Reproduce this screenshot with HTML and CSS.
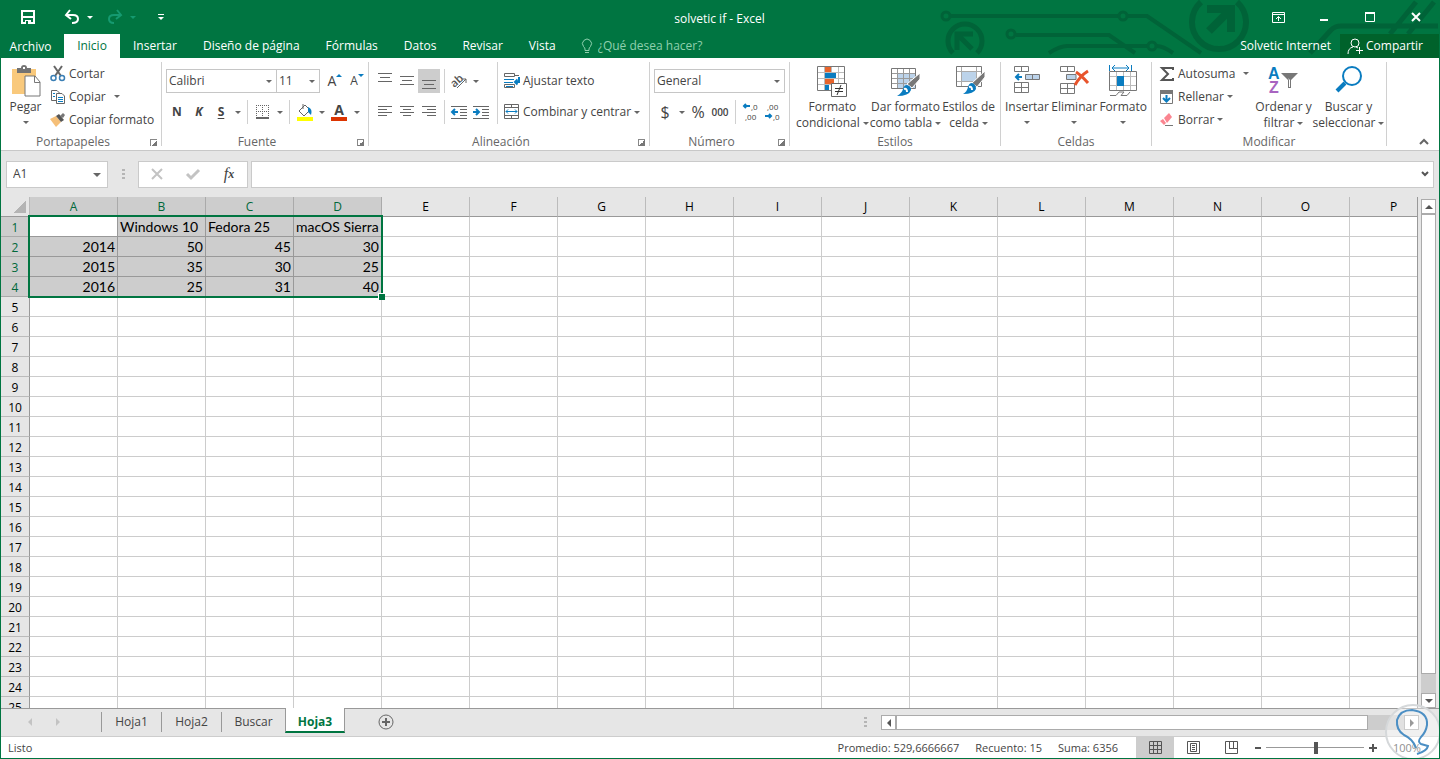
FILE: index.html
```
<!doctype html>

<html lang="es">

	<head>
		<meta charset="utf-8" />
		<title>solvetic if - Excel</title>
		<link rel="stylesheet" href="styles.css">
		<script src="script.js" defer></script>
	</head>

	<body>

		<div class="window">
			<header class="top">
				<svg class="circuit" viewBox="0 0 520 58" width="520" height="58" fill="none" stroke="#006338" stroke-width="4">
					<circle cx="27" cy="16" r="4" stroke-width="3" />
					<path d="M32 16H199M209 16H228L282 53" />
					<circle cx="204" cy="16" r="4" stroke-width="3" />
					<circle cx="92" cy="34" r="4" stroke-width="3" />
					<path d="M97 35H190L216 53M130 53Q141 46 148 46H228M238 46Q244 46 254 53" />
					<circle cx="233" cy="46" r="4" stroke-width="3" />
					<path d="M34 53A17 17 0 1 1 58 53" stroke-width="5" />
					<path d="M38 50V34H54M38 34L53 49" stroke-width="5" />
					<path d="M282 2A27 27 0 1 0 318 2" stroke-width="6" />
					<path d="M288 9H312V32M312 9L290 31" stroke-width="8" />
					<path d="M391 53L412 30Q416 26 422 26H519M471 34L497 2M489 34L515 2" stroke-width="5" />
				</svg>

				<div class="titlebar">
					<div class="quick">
						<button aria-label="Guardar"><svg width="16" height="16" viewBox="0 0 16 16" fill="none" stroke="#fff" stroke-width="2"><path d="M2 2H14V14H2ZM2 8H14" /><path d="M5 15V11H11V15" fill="#fff" stroke="none" /><path d="M7 12V15" stroke="#007541" /></svg></button>
						<button class="undo" aria-label="Deshacer"><svg width="16" height="16" viewBox="0 0 16 16" fill="none" stroke="#fff" stroke-width="2"><path d="M6 1L2 6L7 10M2 6H9Q14 6 14 10T8 14" /></svg><span class="caret"></span></button>
						<button class="redo" aria-label="Rehacer"><svg width="16" height="16" viewBox="0 0 16 16" fill="none" stroke="#159a70" stroke-width="2"><path d="M10 1L14 6L9 10M14 6H7Q2 6 2 10T7 14" /></svg><span class="caret"></span></button>
						<button class="more" aria-label="Personalizar"><span class="dash"></span><span class="caret"></span></button>
					</div>
					<h1>solvetic if - Excel</h1>
					<div class="controls">
						<button aria-label="Opciones de cinta"><svg width="13" height="11" viewBox="0 0 13 11" fill="none" stroke="#fff"><path d="M.5 .5H12.5V10.5H.5ZM0 2.5H13M6.5 9V4.500M4 7L6.500 4.500L9 7" /></svg></button>
						<button aria-label="Minimizar"><svg width="10" height="10" viewBox="0 0 10 10"><path d="M1 7H9V9H1Z" fill="#fff" /></svg></button>
						<button aria-label="Maximizar"><svg width="10" height="10" viewBox="0 0 10 10" fill="none" stroke="#fff"><path d="M.5 1V9.500H9.500V1M0 1H10" /><path d="M0 1H10" stroke-width="2" /></svg></button>
						<button aria-label="Cerrar"><svg width="10" height="10" viewBox="0 0 10 10" stroke="#fff" stroke-width="2"><path d="M1 1L9 9M9 1L1 9" /></svg></button>
					</div>
				</div>

				<nav class="tabs">
					<a class="file" href="#">Archivo</a>
					<a class="active" href="#">Inicio</a>
					<a href="#">Insertar</a>
					<a href="#">Diseño de página</a>
					<a href="#">Fórmulas</a>
					<a href="#">Datos</a>
					<a href="#">Revisar</a>
					<a href="#">Vista</a>
					<label class="tell">
						<svg width="12" height="15" viewBox="0 0 12 15" fill="none" stroke="#8fd0ae"><path d="M4 11.500V10Q4 9 2.500 7.500A4.500 4.500 0 1 1 9.500 7.500Q8 9 8 10V11.500ZM4 13.500H8" /></svg>
						<input type="text" placeholder="¿Qué desea hacer?" />
					</label>
					<a class="account" href="#">Solvetic Internet</a>
					<button class="share">
						<svg width="16" height="16" viewBox="0 0 16 16" fill="none" stroke="#fff"><circle cx="8" cy="5" r="4" /><path d="M1 16Q1 10 6 9M9 9L11 10M12.500 9V16M9 12.500H16" /></svg>
						Compartir
					</button>
				</nav>
			</header>

			<section class="ribbon">
				<div class="group clipboard">
					<div class="tools">
						<button class="big">
							<svg width="30" height="32" viewBox="0 0 30 32"><path d="M1 4H25V29H1Z" fill="#f9c97c" /><path d="M6 3H10Q10 0 13 0T16 3H20V8H6Z" fill="#737373" /><path d="M12 2H14V4H12Z" fill="#fff" /><path d="M14 11H24L29 17V31H14Z" fill="#fff" stroke="#777" /><path d="M23.500 11V17.500H29" fill="none" stroke="#777" /></svg>
							<span>Pegar</span><span class="caret"></span>
						</button>
						<div class="stack">
							<button><svg width="16" height="16" viewBox="0 0 16 16" fill="none"><path d="M4 0L11 10M12 0L5 10" stroke="#666" stroke-width="2" /><circle cx="3.500" cy="12" r="2.500" stroke="#3a7fb5" stroke-width="1.500" /><circle cx="12" cy="12" r="2.500" stroke="#3a7fb5" stroke-width="1.500" /></svg>Cortar</button>
							<button><svg width="16" height="16" viewBox="0 0 16 16" fill="#fff" stroke="#666"><path d="M1.500 1.500H7L9.500 4V11.500H1.500Z" /><path d="M6.500 4.500H12L14.500 7V14.500H6.500Z" /><path d="M3 4.500H5M3 7.500H5M8 8.500H13M8 10.500H13M8 12.500H13" stroke="#0a7cc0" /></svg>Copiar <span class="caret spaced"></span></button>
							<button><svg width="16" height="16" viewBox="0 0 16 16"><path d="M0 7L6 4L11 10L6 15Z" fill="#f5bf78" /><path d="M6 4L9 2L14 8L11 10Z" fill="#555" /><path d="M10 4L13 1L15 3L13 6Z" fill="#777" /></svg>Copiar formato</button>
						</div>
					</div>
					<footer><span>Portapapeles</span><button class="launch" aria-label="Portapapeles"></button></footer>
				</div>

				<div class="group font">
					<div class="tools rows">
						<div class="row">
							<span class="combo family"><select aria-label="Fuente"><option>Calibri</option></select><span class="caret"></span></span>
							<span class="combo size"><select aria-label="Tamaño"><option>11</option></select><span class="caret"></span></span>
							<button class="icon grow"><span>A</span><i class="tri up"></i></button>
							<button class="icon shrink"><span>A</span><i class="tri"></i></button>
						</div>
						<div class="row">
							<button class="icon bold">N</button>
							<button class="icon italic">K</button>
							<button class="icon under">S</button>
							<button class="drop" aria-label="Subrayado"><span class="caret"></span></button>
							<span class="line"></span>
							<button class="icon" aria-label="Bordes"><svg width="14" height="14" viewBox="0 0 14 14" fill="none" stroke="#666"><path d="M.5 0V13M6.500 0V13M12.500 0V13M0 .5H13M0 6.500H13" stroke-dasharray="1 1" /><path d="M0 13H13" stroke-width="2" /></svg></button>
							<button class="drop" aria-label="Más bordes"><span class="caret"></span></button>
							<span class="line"></span>
							<button class="icon" aria-label="Relleno"><svg width="16" height="17" viewBox="0 0 16 17" fill="none"><path d="M2 7L8 1L13 6L7 12Z" stroke="#666" /><path d="M6 5V0" stroke="#666" /><path d="M11 3Q16 5 14 11L11 8Z" fill="#0a7cc0" /><path d="M0 13H16V17H0Z" fill="#ff0" /></svg></button>
							<button class="drop" aria-label="Más rellenos"><span class="caret"></span></button>
							<button class="icon fontcolor">A</button>
							<button class="drop" aria-label="Más colores"><span class="caret"></span></button>
						</div>
					</div>
					<footer><span>Fuente</span><button class="launch" aria-label="Fuente"></button></footer>
				</div>

				<div class="group align">
					<div class="tools">
						<div class="rows">
							<div class="row">
								<button class="icon" aria-label="Arriba"><svg width="14" height="16" viewBox="0 0 14 16" stroke="#666"><path d="M0 .5H14M2 4.500H12M0 8.500H14" /></svg></button>
								<button class="icon" aria-label="Medio"><svg width="14" height="16" viewBox="0 0 14 16" stroke="#666"><path d="M0 3.500H14M2 7.500H12M0 11.500H14" /></svg></button>
								<button class="icon on" aria-label="Abajo"><svg width="14" height="16" viewBox="0 0 14 16" stroke="#666"><path d="M0 7.500H14M2 11.500H12M0 15.500H14" /></svg></button>
								<span class="line"></span>
								<button class="icon" aria-label="Orientación"><svg width="18" height="16" viewBox="0 0 18 16"><text x="0" y="12" transform="rotate(-42 6 8)" font-size="11" font-weight="600" fill="#555">ab</text><path d="M7 15L16 6M12 6H16V10" stroke="#666" fill="none" /></svg></button>
								<button class="drop" aria-label="Más orientaciones"><span class="caret"></span></button>
							</div>
							<div class="row">
								<button class="icon" aria-label="Izquierda"><svg width="14" height="12" viewBox="0 0 14 12" stroke="#666"><path d="M0 .5H14M0 3.500H9M0 6.500H14M0 9.500H9" /></svg></button>
								<button class="icon" aria-label="Centro"><svg width="14" height="12" viewBox="0 0 14 12" stroke="#666"><path d="M0 .5H14M3 3.500H11M0 6.500H14M3 9.500H11" /></svg></button>
								<button class="icon" aria-label="Derecha"><svg width="14" height="12" viewBox="0 0 14 12" stroke="#666"><path d="M0 .5H14M5 3.500H14M0 6.500H14M5 9.500H14" /></svg></button>
								<span class="line"></span>
								<button class="icon" aria-label="Disminuir sangría"><svg width="16" height="13" viewBox="0 0 16 13" stroke="#666"><path d="M0 .5H16M9 3.500H16M9 6.500H16M9 9.500H16M0 12.500H16" /><path d="M7 6H1M4 3L1 6L4 9" fill="none" stroke="#0a7cc0" stroke-width="2" /></svg></button>
								<button class="icon" aria-label="Aumentar sangría"><svg width="16" height="13" viewBox="0 0 16 13" stroke="#666"><path d="M0 .5H16M9 3.500H16M9 6.500H16M9 9.500H16M0 12.500H16" /><path d="M0 6H6M3 3L6 6L3 9" fill="none" stroke="#0a7cc0" stroke-width="2" /></svg></button>
							</div>
						</div>
						<div class="rows wraps">
							<div class="row"><button><svg width="16" height="16" viewBox="0 0 16 16" fill="none" stroke="#666"><path d="M.5 .5H10.500V3.500H.5ZM.5 11.500H10.500V14.500H.5ZM11 2.500H15" /><path d="M15 4V9H11M13.500 6.500L11 9L13.500 11.500" stroke="#0a7cc0" stroke-width="2" /><path d="M0 6.500H10M0 9.500H9M2 13.500H9" stroke="#0a7cc0" /></svg>Ajustar texto</button></div>
							<div class="row"><button><svg width="16" height="16" viewBox="0 0 16 16" fill="none" stroke="#666"><path d="M.5 .5H14.500V14.500H.5ZM0 3.500H15M0 11.500H15M7.500 0V3M7.500 12V15" /><path d="M2 7.500H13M4 5.500L2 7.500L4 9.500M11 5.500L13 7.500L11 9.500" stroke="#0a7cc0" /></svg>Combinar y centrar <span class="caret spaced"></span></button></div>
						</div>
					</div>
					<footer><span>Alineación</span><button class="launch" aria-label="Alineación"></button></footer>
				</div>

				<div class="group number">
					<div class="tools rows">
						<div class="row">
							<span class="combo format"><select aria-label="Formato de número"><option>General</option></select><span class="caret"></span></span>
						</div>
						<div class="row">
							<button class="icon sign">$</button>
							<button class="drop" aria-label="Moneda"><span class="caret"></span></button>
							<button class="icon sign">%</button>
							<button class="icon zeros">000</button>
							<span class="line"></span>
							<button class="icon" aria-label="Aumentar decimales"><svg width="16" height="18" viewBox="0 0 16 18"><path d="M7 3H1M3 1L1 3L3 5" fill="none" stroke="#0a7cc0" stroke-width="2" /><text x="8" y="7" font-size="8" fill="#444">,0</text><text x="2" y="17" font-size="8" fill="#444">,00</text></svg></button>
							<button class="icon" aria-label="Disminuir decimales"><svg width="16" height="18" viewBox="0 0 16 18"><text x="2" y="7" font-size="8" fill="#444">,00</text><path d="M0 13H6M4 11L6 13L4 15" fill="none" stroke="#0a7cc0" stroke-width="2" /><text x="8" y="17" font-size="8" fill="#444">,0</text></svg></button>
						</div>
					</div>
					<footer><span>Número</span><button class="launch" aria-label="Número"></button></footer>
				</div>

				<div class="group styles">
					<div class="tools">
						<button class="big">
							<svg width="32" height="32" viewBox="0 0 32 32" fill="none"><path d="M1.500 1.500H28.500V25.500H1.500Z" fill="#fff" stroke="#777" /><path d="M8.500 2V25M15.500 2V25M22.500 2V25M2 7.500H28M2 13.500H28M2 19.500H28" stroke="#bbb" /><path d="M9 2H15V7H9ZM9 14H18V19H9Z" fill="#e8642c" /><path d="M9 8H20V13H9ZM9 20H13V25H9Z" fill="#0a7cc0" /><path d="M15.500 18.500H30.500V31.500H15.500Z" fill="#fff" stroke="#666" /><path d="M19 23.500H27M19 26.500H27M25 20L21 30" stroke="#333" /></svg>
							<span>Formato</span><span>condicional<i class="caret"></i></span>
						</button>
						<button class="big">
							<svg width="32" height="32" viewBox="0 0 32 32" fill="none"><path d="M2.500 3.500H26.500V23.500H2.500Z" fill="#fff" stroke="#777" /><path d="M8 9H26V23H8Z" fill="#bcd3ea" /><path d="M8.500 4V23M14.500 4V23M20.500 4V23M3 8.500H26M3 13.500H26M3 18.500H26" stroke="#999" /><path d="M31 8V14L23 23L18 19Z" fill="#777" stroke="#fff" /><path d="M18 20Q22 21 22 25Q20 31 8 31Q13 28 14 24Q15 20 18 20Z" fill="#0a7cc0" /><path d="M15 24Q18 23 18 27" stroke="#fff" stroke-width="2" /></svg>
							<span>Dar formato</span><span>como tabla<i class="caret"></i></span>
						</button>
						<button class="big">
							<svg width="32" height="32" viewBox="0 0 32 32" fill="none"><path d="M3.500 1.500H28.500V21.500H3.500Z" fill="#fff" stroke="#777" /><path d="M8.500 2V21M23.500 2V21M4 6.500H28M4 16.500H28" stroke="#aaa" /><path d="M9 7H23V16H9Z" fill="#bcd3ea" /><path d="M32 6V12L24 22L19 18Z" fill="#777" stroke="#fff" /><path d="M19 18Q23 19 23 24Q21 29 10 29Q14 27 15 22Q16 18 19 18Z" fill="#0a7cc0" /><path d="M16 22Q19 21 19 25" stroke="#fff" stroke-width="2" /></svg>
							<span>Estilos de</span><span>celda<i class="caret"></i></span>
						</button>
					</div>
					<footer><span>Estilos</span></footer>
				</div>

				<div class="group cells">
					<div class="tools">
						<button class="big">
							<svg width="32" height="32" viewBox="0 0 32 32" fill="none" stroke="#777"><path d="M3.500 1.500H17.500V6.500H3.500ZM10.500 1V7M3.500 17.500H17.500V27.500H3.500ZM10.500 17V28M3 22.500H18" /><path d="M14.500 9.500H28.500V14.500H14.500ZM21.500 9V15" fill="#bcd3ea" /><path d="M11 12H5M8 9L5 12L8 15" stroke="#0a7cc0" stroke-width="2" /></svg>
							<span>Insertar</span><span class="caret"></span>
						</button>
						<button class="big">
							<svg width="32" height="32" viewBox="0 0 32 32" fill="none" stroke="#777"><path d="M2.500 1.500H16.500V6.500H2.500ZM9.500 1V7M2.500 18.500H16.500V28.500H2.500ZM9.500 18V29M2 23.500H17" /><path d="M8.500 9.500H18V14.500H8.500Z" fill="#bcd3ea" /><path d="M18 7Q23 10 30 18M30 6Q22 11 17 20" stroke="#e8542c" stroke-width="3" /></svg>
							<span>Eliminar</span><span class="caret"></span>
						</button>
						<button class="big">
							<svg width="32" height="32" viewBox="0 0 32 32" fill="none" stroke="#777"><path d="M2.500 6.500H29.500V25.500H2.500Z" fill="#fff" /><path d="M9.500 7V25M16.500 7V25M23.500 7V25M3 11.500H29M3 20.500H29" stroke="#bbb" /><path d="M10 11H17V21H10Z" fill="#0a7cc0" stroke="none" /><path d="M3 30.500H9L12 27H17L14 30.500H20L23 27" /><path d="M2.500 0V6M24.500 0V6M5 3H22M8 0L5 3L8 6M19 0L22 3L19 6" stroke="#0a7cc0" /></svg>
							<span>Formato</span><span class="caret"></span>
						</button>
					</div>
					<footer><span>Celdas</span></footer>
				</div>

				<div class="group edit">
					<div class="tools">
						<div class="stack">
							<button><svg width="16" height="16" viewBox="0 0 16 16" fill="none" stroke="#555" stroke-width="2"><path d="M14 4V2H3L9 8L3 14H14V12" /></svg>Autosuma <span class="caret spaced"></span></button>
							<button><svg width="16" height="16" viewBox="0 0 16 16" fill="none"><path d="M1.500 1.500H13.500V14.500H1.500Z" stroke="#777" /><path d="M1 1H14V5H1Z" fill="#777" /><path d="M7.500 6V12M4 9L7.500 12.500L11 9" stroke="#0a7cc0" stroke-width="2" /></svg>Rellenar<span class="caret"></span></button>
							<button><svg width="16" height="16" viewBox="0 0 16 16"><path d="M5 6L10 1L13 5L8 11Z" fill="#fb8590" /><path d="M1 9L4 7L7 11L5 13Z" fill="#fb8590" /><path d="M6 13.500H14" stroke="#777" /></svg>Borrar<span class="caret"></span></button>
						</div>
						<button class="big">
							<svg class="sort" width="32" height="32" viewBox="0 0 32 32"><text x="0" y="14" font-size="16" fill="#0a7cc0">A</text><text x="1" y="28" font-size="16" fill="#a864c0">Z</text><path d="M13 8H30L23 15V23H20V15Z" fill="#777" /><path d="M20 13L22 15V22H21V15Z" fill="#fff" /></svg>
							<span>Ordenar y</span><span>filtrar<i class="caret"></i></span>
						</button>
						<button class="big">
							<svg width="32" height="32" viewBox="0 0 32 32" fill="none" stroke="#0a7cc0"><circle cx="19" cy="11" r="9" stroke-width="2" /><path d="M12 18L4 26" stroke-width="4" /></svg>
							<span>Buscar y</span><span>seleccionar<i class="caret"></i></span>
						</button>
					</div>
					<footer><span>Modificar</span></footer>
				</div>

				<button class="collapse" aria-label="Contraer"><svg width="10" height="7" viewBox="0 0 10 7" fill="none" stroke="#666" stroke-width="2"><path d="M1 6L5 2L9 6" /></svg></button>
			</section>

			<section class="formulabar">
				<div class="namebox"><input type="text" value="A1" aria-label="Cuadro de nombres" /><button aria-label="Nombres"><i class="caret wide"></i></button></div>
				<span class="dots"></span>
				<div class="fx">
					<button aria-label="Cancelar"><svg width="12" height="12" viewBox="0 0 12 12" stroke="#c3c3c3" stroke-width="2"><path d="M1 1L11 11M11 1L1 11" /></svg></button>
					<button aria-label="Introducir"><svg width="14" height="12" viewBox="0 0 14 12" fill="none" stroke="#c3c3c3" stroke-width="3"><path d="M1 6L5 10L13 2" /></svg></button>
					<button class="fn"><i>f</i><i class="x">x</i></button>
				</div>
				<div class="formula"><input type="text" aria-label="Fórmula" /><button aria-label="Expandir"><svg width="8" height="6" viewBox="0 0 8 6" fill="none" stroke="#555" stroke-width="2"><path d="M1 1L4 4L7 1" /></svg></button></div>
			</section>

			<main class="sheet">
				<div class="grid">
					<table>
						<thead><tr id="letters"><th class="corner"></th></tr></thead>
						<tbody id="rows"></tbody>
					</table>
					<div class="selection"></div>
				</div>
				<div class="vscroll">
					<button aria-label="Subir"><i class="arrow up"></i></button>
					<div class="track"><div class="thumb"></div></div>
					<button aria-label="Bajar"><i class="arrow down"></i></button>
				</div>
			</main>

			<section class="sheets">
				<div class="steps"><button aria-label="Anterior"><i class="arrow left"></i></button><button aria-label="Siguiente"><i class="arrow right"></i></button></div>
				<a href="#">Hoja1</a>
				<a href="#">Hoja2</a>
				<a href="#">Buscar</a>
				<a class="active" href="#">Hoja3</a>
				<button class="add" aria-label="Hoja nueva"><svg width="16" height="16" viewBox="0 0 16 16" fill="none" stroke="#666"><circle cx="8" cy="8" r="7" /><path d="M4 8H12M8 4V12" stroke-width="2" /></svg></button>
				<span class="dots"></span>
				<div class="hscroll">
					<button aria-label="Izquierda"><i class="arrow left"></i></button>
					<div class="track"><div class="thumb"></div></div>
					<button aria-label="Derecha"><i class="arrow right"></i></button>
				</div>
			</section>

			<footer class="status">
				<span class="ready">Listo</span>
				<span>Promedio: 529,6666667</span>
				<span>Recuento: 15</span>
				<span>Suma: 6356</span>
				<div class="views">
					<button class="on" aria-label="Normal"><svg width="13" height="13" viewBox="0 0 13 13" fill="none" stroke="#555"><path d="M.5 .5H12.500V12.500H.5ZM4.500 0V13M8.500 0V13M0 4.500H13M0 8.500H13" /></svg></button>
					<button aria-label="Diseño de página"><svg width="13" height="13" viewBox="0 0 13 13" fill="none" stroke="#555"><path d="M.5 .5H12.500V12.500H.5ZM3.500 2.500H9.500V10.500H3.500ZM5 4.500H8M5 6.500H8M5 8.500H8" /></svg></button>
					<button aria-label="Salto de página"><svg width="13" height="13" viewBox="0 0 13 13" fill="none" stroke="#555"><path d="M.5 .5H12.500V12.500H.5ZM4.500 0V7.500M8.500 0V7.500M4 7.500H13" /></svg></button>
				</div>
				<div class="zoom">
					<button aria-label="Alejar"><svg width="8" height="8" viewBox="0 0 8 8" stroke="#555" stroke-width="2"><path d="M1 4H7" /></svg></button>
					<input type="range" min="0" max="100" value="51" aria-label="Zoom" />
					<button aria-label="Acercar"><svg width="8" height="8" viewBox="0 0 8 8" stroke="#555" stroke-width="2"><path d="M0 4H8M4 0V8" /></svg></button>
					<span class="percent">100%</span>
				</div>
			</footer>

			<svg class="bulb" width="56" height="56" viewBox="0 0 56 56" fill="none">
				<circle cx="28" cy="28" r="27" fill="#fff" fill-opacity=".4" stroke="#d5d8da" stroke-width="2" />
				<path d="M31 44Q28 35 19 31Q11 26 12 16Q15 6 27 6Q43 8 42 21Q41 28 36 33Q32 38 36 40L43 42Q42 47 32 50" stroke="#4c8fc4" stroke-width="2" />
			</svg>
		</div>

	</body>

</html>
```
FILE: styles.css
```
* {
	box-sizing: border-box;
}

body {
	margin: 0;
	font-family: "Open Sans", "Segoe UI", sans-serif;
	font-size: 12px;
	line-height: 16px;
	color: #444;
}

button, input, select {
	margin: 0;
	padding: 0;
	border: none;
	outline: none;
	background: none;
	font: inherit;
	color: inherit;
}

a {
	color: inherit;
	text-decoration: none;
}

svg {
	display: block;
	flex: none;
	overflow: visible;
}

.window {
	position: relative;
	display: flex;
	flex-direction: column;
	height: 100vh;
	border: 1px solid #007541;
	border-top: none;
	background: #e6e6e6;
	overflow: hidden;
}

.caret {
	display: inline-block;
	flex: none;
	border: 3px solid transparent;
	border-top-color: #666;
	border-bottom: none;
	vertical-align: middle;
}

.caret.wide {
	border-width: 4px 4px 0;
}

/* title bar and tabs */

.top {
	position: relative;
	flex: none;
	background: #007541;
	color: #fff;
}

.circuit {
	position: absolute;
	top: 0;
	right: 0;
}

.titlebar {
	position: relative;
	display: flex;
	align-items: center;
	height: 34px;
}

.titlebar h1 {
	margin: 0;
	padding: 4px 20px 0 0;
	font-size: 12px;
	font-weight: normal;
}

.quick {
	display: flex;
	flex: 1;
	align-items: center;
	gap: 20px;
	padding-left: 19px;
}

.quick button {
	display: flex;
	align-items: center;
	gap: 7px;
}

.quick .undo {
	margin-left: 8px;
}

.quick .redo {
	margin-left: -6px;
}

.quick .caret {
	border-top-color: #fff;
}

.quick .redo .caret {
	border-top-color: #159a70;
}

.quick .more {
	flex-direction: column;
	gap: 2px;
	margin-left: 2px;
}

.dash {
	width: 6px;
	height: 1px;
	background: #fff;
}

.controls {
	display: flex;
	flex: 1;
	justify-content: flex-end;
}

.controls button {
	display: flex;
	justify-content: center;
	width: 46px;
}

.tabs {
	position: relative;
	display: flex;
	align-items: stretch;
	height: 24px;
	line-height: 24px;
}

.tabs a {
	padding: 0 13px;
}

.tabs .file {
	width: 63px;
	padding: 1px 4px 0 0;
	text-align: center;
}

.tabs .active {
	width: 56px;
	padding: 0;
	background: #fff;
	color: #007541;
	text-align: center;
}

.tell {
	display: flex;
	flex: 1;
	align-items: center;
	gap: 5px;
	padding-left: 12px;
}

.tell input {
	width: 160px;
}

.tell input::placeholder {
	color: #8fd0ae;
	opacity: 1;
}

.tabs .account {
	padding: 0 9px;
}

.share {
	display: flex;
	align-items: center;
	gap: 3px;
	width: 99px;
	padding-left: 7px;
	background: #00622b;
}

/* ribbon */

.ribbon {
	display: flex;
	flex: none;
	height: 93px;
	border-bottom: 1px solid #c8c8c8;
	background: #fff;
}

.group {
	display: flex;
	flex: none;
	flex-direction: column;
	justify-content: space-between;
	margin: 4px 0;
	border-right: 1px solid #d0d0d0;
}

.group footer {
	display: flex;
	align-items: center;
	height: 8px;
	color: #666;
}

.group footer span {
	flex: 1;
	text-align: center;
}

.launch {
	width: 7px;
	height: 7px;
	margin: 0 4px 0 5px;
	border: 1px solid #888;
	border-width: 1px 0 0 1px;
	background: linear-gradient(135deg, transparent 50%, #777 50%);
}

.tools {
	display: flex;
}

.clipboard { width: 161px; }
.font { width: 207px; }
.align { width: 281px; }
.number { width: 140px; }
.styles { width: 211px; }
.cells { width: 151px; }
.edit { width: 235px; }

.tools button {
	display: flex;
	align-items: center;
	white-space: nowrap;
}

.tools .big {
	flex-direction: column;
	flex: none;
	padding-top: 3px;
}

.big svg {
	margin-bottom: 2px;
}

.big .caret {
	margin: 6px 0 0;
}

.big i.caret {
	margin: 0 0 0 3px;
}

.clipboard .big {
	width: 49px;
}

.stack {
	display: flex;
	flex-direction: column;
}

.stack button {
	height: 23px;
	gap: 3px;
}

.caret.spaced {
	margin-left: 5px;
}

.rows {
	display: flex;
	flex-direction: column;
	gap: 7px;
	padding-top: 7px;
}

.row {
	display: flex;
	align-items: stretch;
	height: 24px;
}

.font .tools, .number .tools {
	padding-left: 4px;
}

.combo {
	position: relative;
	display: flex;
	align-items: center;
	border: 1px solid #c6c6c6;
}

.combo select {
	width: 100%;
	padding-left: 2px;
	appearance: none;
}

.combo .caret {
	position: absolute;
	right: 4px;
	pointer-events: none;
}

.family {
	width: 111px;
}

.size {
	width: 44px;
	margin-left: -1px;
}

.format {
	width: 131px;
}

.icon {
	flex: none;
	justify-content: center;
	width: 22px;
}

.icon.on {
	background: #cdcdcd;
}

.drop {
	flex: none;
	justify-content: center;
	width: 11px;
}

.line {
	flex: none;
	width: 1px;
	margin: 0 4px;
	background: #d0d0d0;
}

.grow {
	margin-left: 4px;
	font-size: 14px;
}

.tri {
	align-self: flex-start;
	margin-top: 5px;
	border: 3px solid transparent;
	border-top-color: #0a7cc0;
	border-bottom: none;
}

.tri.up {
	border-top: none;
	border-bottom: 3px solid #0a7cc0;
}

.bold, .under, .italic {
	font-weight: bold;
}

.italic {
	font-style: italic;
}

.under {
	text-decoration: underline;
	text-underline-offset: 2px;
}

.tools .fontcolor {
	align-self: center;
	width: 16px;
	height: 17px;
	margin: 0 4px;
	border-bottom: 4px solid #dc3400;
	font-size: 14px;
	font-weight: bold;
	line-height: 12px;
}

.align .tools {
	padding-left: 5px;
}

.align .line {
	margin: 0 3px 0 4px;
}

.wraps {
	margin-left: 5px;
	padding-left: 6px;
	border-left: 1px solid #d0d0d0;
}

.wraps button {
	gap: 3px;
}

.wraps .spaced {
	margin-left: 0;
}

.sign {
	font-size: 16px;
}

.zeros {
	font-size: 10px;
	font-weight: 600;
}

.styles .tools {
	justify-content: space-between;
	padding: 0 5px 0 6px;
}

.cells .tools {
	justify-content: space-between;
	padding: 0 4px;
}

.edit .tools {
	padding-left: 7px;
}

.edit .stack {
	width: 92px;
}

.edit .big {
	width: 65px;
}

.sort {
	font-family: "Liberation Sans", sans-serif;
	font-weight: bold;
}

.collapse {
	display: flex;
	flex: 1;
	align-items: flex-end;
	justify-content: flex-end;
	padding: 0 10px 5px 0;
}

/* formula bar */

.formulabar {
	display: flex;
	flex: none;
	align-items: center;
	height: 46px;
	padding: 0 5px;
}

.namebox, .fx, .formula {
	display: flex;
	align-items: center;
	height: 27px;
	border: 1px solid #cacaca;
	background: #fff;
}

.namebox {
	width: 102px;
	padding: 0 6px;
}

.namebox input {
	flex: 1;
	min-width: 0;
}

.dots {
	width: 3px;
	height: 11px;
	background: repeating-linear-gradient(#b5b5b5 0 2px, transparent 2px 4px);
}

.formulabar .dots {
	margin: 0 13px 0 14px;
}

.fx {
	width: 110px;
}

.fx button {
	display: flex;
	flex: 1;
	justify-content: center;
}

.fn {
	font-family: "Liberation Serif", serif;
	font-size: 16px;
}

.fn .x {
	font-size: 12px;
	font-weight: bold;
}

.formula {
	flex: 1;
	margin-left: 3px;
	padding-right: 4px;
}

.formula input {
	flex: 1;
}

/* cells */

.sheet {
	display: flex;
	flex: 1;
	min-height: 0;
}

.grid {
	position: relative;
	flex: 1;
	min-width: 0;
	border-right: 1px solid #999;
	overflow: hidden;
}

.grid table {
	width: 1437px;
	table-layout: fixed;
	border-spacing: 0;
}

.grid th, .grid td {
	width: 88px;
	height: 20px;
	padding: 0 2px;
	border-right: 1px solid #ccc;
	border-bottom: 1px solid #ccc;
	font-family: Lato, Calibri, sans-serif;
	font-size: 14px;
	font-weight: normal;
	line-height: 18px;
	text-align: center;
	white-space: nowrap;
	color: #000;
}

.grid th {
	border-color: #bbb;
	font-family: inherit;
	font-size: 12px;
	background: #e6e6e6;
}

.grid thead th {
	border-bottom-color: #999;
}

.grid tbody th {
	padding-top: 2px;
	line-height: 17px;
	border-right-color: #999;
}

.grid .corner {
	width: 29px;
	background: linear-gradient(#b4b4b4, #b4b4b4);
	background: linear-gradient(135deg, transparent 50%, #b4b4b4 50%) 13px 4px / 12px 12px no-repeat #e6e6e6;
	border-right-color: #bbb;
}

.grid th.picked {
	background: #cdcdcd;
	border-color: #aaa;
	color: #00683a;
}

.grid td {
	background: #fff;
	text-align: right;
}

.grid td.text {
	text-align: left;
}

.grid td.picked {
	background: #cdcdcd;
	border-color: #999;
}

.grid td.current {
	background: #fff;
}

.selection {
	position: absolute;
	top: 18px;
	left: 27px;
	width: 355px;
	height: 83px;
	border: 2px solid #007541;
}

.selection::after {
	content: "";
	position: absolute;
	right: -4px;
	bottom: -4px;
	width: 6px;
	height: 6px;
	border: 1px solid #fff;
	border-width: 1px 0 0 1px;
	background: #007541;
}

.arrow {
	border: 4px solid transparent;
}

.arrow.up { border-bottom-color: #555; border-top: none; }
.arrow.down { border-top-color: #555; border-bottom: none; }
.arrow.left { border-right-color: #555; border-left: none; }
.arrow.right { border-left-color: #555; border-right: none; }

.vscroll {
	display: flex;
	flex-direction: column;
	width: 21px;
	padding: 2px 3px 0;
}

.vscroll button, .hscroll button {
	display: flex;
	flex: none;
	align-items: center;
	justify-content: center;
	width: 15px;
	height: 15px;
	border: 1px solid #ababab;
	background: #fff;
}

.track {
	display: flex;
	flex: 1;
	background: #cdcdcd;
}

.thumb {
	border: 1px solid #ababab;
	background: #fff;
}

.vscroll .thumb {
	width: 15px;
	height: 96%;
}

.hscroll .thumb {
	width: 93%;
}

/* sheet tabs */

.sheets {
	display: flex;
	flex: none;
	align-items: flex-start;
	height: 29px;
	border-top: 1px solid #999;
	border-bottom: 1px solid #cdcdcd;
}

.steps {
	display: flex;
	align-items: center;
	gap: 24px;
	width: 100px;
	height: 26px;
	padding-left: 27px;
}

.steps .arrow {
	display: block;
}

.steps .left { border-right-color: #c3c3c3; }
.steps .right { border-left-color: #c3c3c3; }

.sheets a {
	min-width: 60px;
	height: 20px;
	margin-top: 3px;
	border-left: 1px solid #999;
	line-height: 19px;
	text-align: center;
}

.sheets a:nth-of-type(3) {
	width: 64px;
}

.sheets .active {
	height: 25px;
	margin-top: -1px;
	border-right: 1px solid #999;
	border-bottom: 2px solid #007541;
	background: #fff;
	font-weight: bold;
	line-height: 27px;
	color: #007541;
}

.add {
	margin: 5px 0 0 33px;
}

.sheets .dots {
	margin: 8px 14px 0 auto;
}

.hscroll {
	display: flex;
	width: 538px;
	margin: 6px 20px 0 0;
}

/* status bar */

.status {
	display: flex;
	flex: none;
	align-items: center;
	gap: 16px;
	height: 21px;
	padding-left: 7px;
	background: #fff;
	font-size: 11px;
}

.ready {
	flex: 1;
}

.views {
	display: flex;
	align-self: stretch;
	margin-left: 2px;
}

.views button {
	display: flex;
	align-items: center;
	justify-content: center;
	width: 38px;
}

.views .on {
	background: #cdcdcd;
}

.zoom {
	display: flex;
	align-items: center;
	width: 185px;
	margin-left: -12px;
}

.zoom input {
	width: 98px;
	height: 12px;
	margin: 0 5px 0 4px;
	appearance: none;
	background: linear-gradient(#999, #999) center / 100% 1px no-repeat;
}

.zoom input::-webkit-slider-thumb {
	width: 4px;
	height: 12px;
	appearance: none;
	background: #555;
}

.percent {
	margin-left: 16px;
}

.bulb {
	position: absolute;
	right: -2px;
	bottom: -2px;
	pointer-events: none;
}
```
FILE: script.js
```
var data = [
	["", "Windows 10", "Fedora 25", "macOS Sierra"],
	[2014, 50, 45, 30],
	[2015, 35, 30, 25],
	[2016, 25, 31, 40]
];
var letters = "ABCDEFGHIJKLMNOP";
var head = document.getElementById("letters");
var body = document.getElementById("rows");

for (var i = 0; i < letters.length; i++) {
	var th = document.createElement("th");
	th.textContent = letters[i];
	if (i < data[0].length) {
		th.className = "picked";
	}
	head.appendChild(th);
}

for (var r = 0; r < 25; r++) {
	var row = body.insertRow();
	var num = document.createElement("th");
	num.textContent = r + 1;
	if (r < data.length) {
		num.className = "picked";
	}
	row.appendChild(num);

	for (var c = 0; c < letters.length; c++) {
		var cell = row.insertCell();
		if (r < data.length && c < data[r].length) {
			cell.textContent = data[r][c];
			cell.className = "picked";
			if (r === 0) {
				cell.classList.add(c === 0 ? "current" : "text");
			}
		}
	}
}
```
